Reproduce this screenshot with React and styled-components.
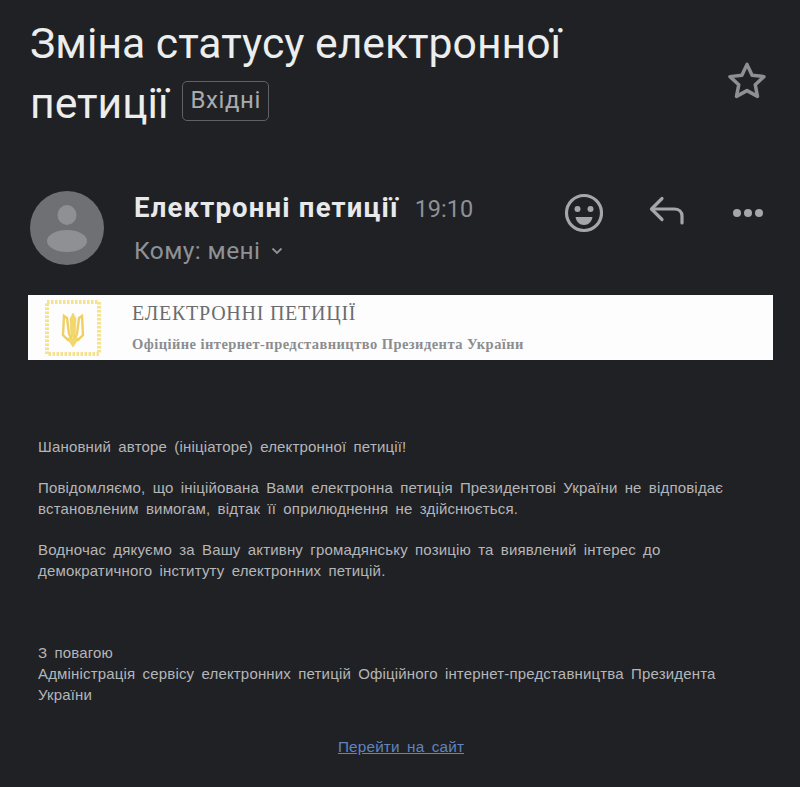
import styled, { createGlobalStyle } from 'styled-components'

const GlobalStyle = createGlobalStyle`
    html, body {
        margin: 0;
        padding: 0;
        background: #202125;
    }
`

const Page = styled.div`
    width: 800px;
    height: 787px;
    overflow: hidden;
    box-sizing: border-box;
    padding: 13px 27px 0 28px;
    background: #202125;
    font-family: Roboto, "Liberation Sans", sans-serif;
`

const SubjectRow = styled.div`
    display: flex;
    justify-content: space-between;
    align-items: flex-start;
    padding-left: 2px;
`

const Subject = styled.h1`
    margin: 0;
    width: 600px;
    font-size: 42.7px;
    font-weight: 400;
    line-height: 60px;
    color: #eceded;
`

const Label = styled.span`
    display: inline-block;
    box-sizing: border-box;
    height: 40px;
    margin-left: 14px;
    padding: 0 7px;
    border: 1.5px solid #5f6166;
    border-radius: 5px;
    font-size: 24px;
    line-height: 36px;
    letter-spacing: 0.6px;
    color: #a9abae;
    vertical-align: 10px;
`

const Star = styled.svg`
    width: 42px;
    height: 42px;
    margin: 47px 5px 0 0;
    fill: none;
    stroke: #8d8f93;
    stroke-width: 2;
    stroke-linejoin: round;
`

const SenderRow = styled.div`
    display: flex;
    align-items: flex-start;
    margin-top: 58px;
    padding-left: 2px;
`

const Avatar = styled.svg`
    width: 74px;
    height: 74px;
    flex: none;
`

const SenderInfo = styled.div`
    margin-left: 30px;
    flex: 1;
`

const SenderLine = styled.div`
    display: flex;
    align-items: baseline;
    gap: 16px;
    height: 36px;
    line-height: 34px;
`

const SenderName = styled.span`
    font-size: 27.5px;
    font-weight: 700;
    letter-spacing: 1.2px;
    color: #e8e9ea;
`

const Time = styled.span`
    font-size: 23.5px;
    color: #8f9195;
`

const Recipient = styled.div`
    display: flex;
    align-items: center;
    gap: 11px;
    margin-top: 9px;
    font-size: 24.5px;
    line-height: 30px;
    letter-spacing: 0.4px;
    color: #8f9195;
`

const Actions = styled.div`
    display: flex;
    align-items: center;
    gap: 46px;
    margin: 2px 8px 0 0;
    color: #a5a6aa;
`

const ActionIcon = styled.svg`
    width: ${(props) => props.$size}px;
    height: ${(props) => props.$size}px;
    fill: none;
    stroke: currentColor;
    stroke-width: 3.2;
    stroke-linecap: round;
    stroke-linejoin: round;
`

const Banner = styled.div`
    display: flex;
    align-items: center;
    height: 65px;
    width: 745px;
    margin-top: 29px;
    background: #fdfdfe;
    font-family: "Liberation Serif", serif;
`

const Emblem = styled.svg`
    width: 58px;
    height: 58px;
    flex: none;
    margin: 1px 0 0 16px;
`

const BannerText = styled.div`
    margin: 0 0 2px 30px;
`

const BannerTitle = styled.div`
    font-size: 20px;
    line-height: 24px;
    letter-spacing: 0.75px;
    color: #6b6c6e;
`

const BannerSub = styled.div`
    margin-top: 10px;
    font-size: 14.5px;
    font-weight: 700;
    line-height: 18px;
    letter-spacing: 0.45px;
    color: #8c8d8f;
`

const Body = styled.div`
    margin-top: 76px;
    padding-left: 10px;
    width: 726px;
    font-family: "Liberation Sans", sans-serif;
    font-size: 15px;
    line-height: 21px;
    letter-spacing: 0.17px;
    word-spacing: 2.9px;
    color: #b5b6b8;
`

const Paragraph = styled.p`
    margin: 0 0 20px;
`

const Signature = styled.p`
    margin: 61px 0 0;
`

const LinkRow = styled.div`
    margin-top: 31px;
    text-align: center;
`

const SiteLink = styled.a`
    color: #5f84bf;
    text-decoration: underline;
    font-size: 15.3px;
`

const Trident = () => (
    <g fill="#f2d76a" stroke="#efd060" strokeWidth="0.6">
        <path d="M29 14 l3 6 -1 18 h-4 l-1 -18z" />
        <path d="M20 17 l3 2 2 16 3 6 h-4 l-5 -5z" fill="none" strokeWidth="2.4" />
        <path d="M38 17 l-3 2 -2 16 -3 6 h4 l5 -5z" fill="none" strokeWidth="2.4" />
        <path d="M23 39 h12 l-6 9z" />
    </g>
)

const App = () => {
    return (
        <>
            <GlobalStyle />
            <Page>
                <SubjectRow>
                    <Subject>
                        Зміна статусу електронної петиції
                        <Label>Вхідні</Label>
                    </Subject>
                    <Star viewBox="0 0 24 24">
                        <path d="M12 2.5l2.9 6.2 6.8.8-5 4.6 1.300 6.700-6-3.300-6 3.300 1.300-6.700-5-4.600 6.800-.8z" />
                    </Star>
                </SubjectRow>

                <SenderRow>
                    <Avatar viewBox="0 0 74 74">
                        <circle cx="37" cy="37" r="37" fill="#6e7074" />
                        <ellipse cx="37" cy="24" rx="9.5" ry="10" fill="#8f9094" />
                        <ellipse cx="37" cy="50" rx="20" ry="11" fill="#8f9094" />
                    </Avatar>
                    <SenderInfo>
                        <SenderLine>
                            <SenderName>Електронні петиції</SenderName>
                            <Time>19:10</Time>
                        </SenderLine>
                        <Recipient>
                            Кому: мені
                            <svg width="12" height="8" viewBox="0 0 12 8" fill="none" stroke="#8f9195" strokeWidth="1.8">
                                <path d="M1.5 1.5L6 6l4.5-4.5" />
                            </svg>
                        </Recipient>
                    </SenderInfo>
                    <Actions>
                        <ActionIcon $size={40} viewBox="0 0 40 40">
                            <circle cx="21" cy="20" r="17.5" />
                            <circle cx="14.5" cy="16" r="3" fill="currentColor" stroke="none" />
                            <circle cx="27.500" cy="16" r="3" fill="currentColor" stroke="none" />
                            <path d="M12.500 24h17c-.8 4.800-4 8-8.500 8s-7.700-3.200-8.500-8z" fill="currentColor" stroke="none" />
                        </ActionIcon>
                        <ActionIcon $size={36} viewBox="0 0 36 36">
                            <path d="M13 3.500L2.500 14 13 24.500" />
                            <path d="M3 14h22c5 0 8 3 8 7v7" />
                        </ActionIcon>
                        <ActionIcon $size={34} viewBox="0 0 34 34">
                            <circle cx="6" cy="17" r="4" fill="currentColor" stroke="none" />
                            <circle cx="17" cy="17" r="4" fill="currentColor" stroke="none" />
                            <circle cx="28" cy="17" r="4" fill="currentColor" stroke="none" />
                        </ActionIcon>
                    </Actions>
                </SenderRow>

                <Banner>
                    <Emblem viewBox="0 0 58 58">
                        <rect x="3" y="3" width="52" height="52" fill="none" stroke="#f5e28f" strokeWidth="4" strokeDasharray="2.500 1.500" />
                        <Trident />
                    </Emblem>
                    <BannerText>
                        <BannerTitle>ЕЛЕКТРОННІ ПЕТИЦІЇ</BannerTitle>
                        <BannerSub>Офіційне інтернет-представництво Президента України</BannerSub>
                    </BannerText>
                </Banner>

                <Body>
                    <Paragraph>Шановний авторе (ініціаторе) електронної петиції!</Paragraph>
                    <Paragraph>
                        Повідомляємо, що ініційована Вами електронна петиція Президентові України не відповідає встановленим вимогам, відтак її оприлюднення не здійснюється.
                    </Paragraph>
                    <Paragraph>
                        Водночас дякуємо за Вашу активну громадянську позицію та виявлений інтерес до демократичного інституту електронних петицій.
                    </Paragraph>
                    <Signature>
                        З повагою
                        <br />
                        Адміністрація сервісу електронних петицій Офіційного інтернет-представництва Президента України
                    </Signature>
                    <LinkRow>
                        <SiteLink href="#">Перейти на сайт</SiteLink>
                    </LinkRow>
                </Body>
            </Page>
        </>
    )
}

export default App
